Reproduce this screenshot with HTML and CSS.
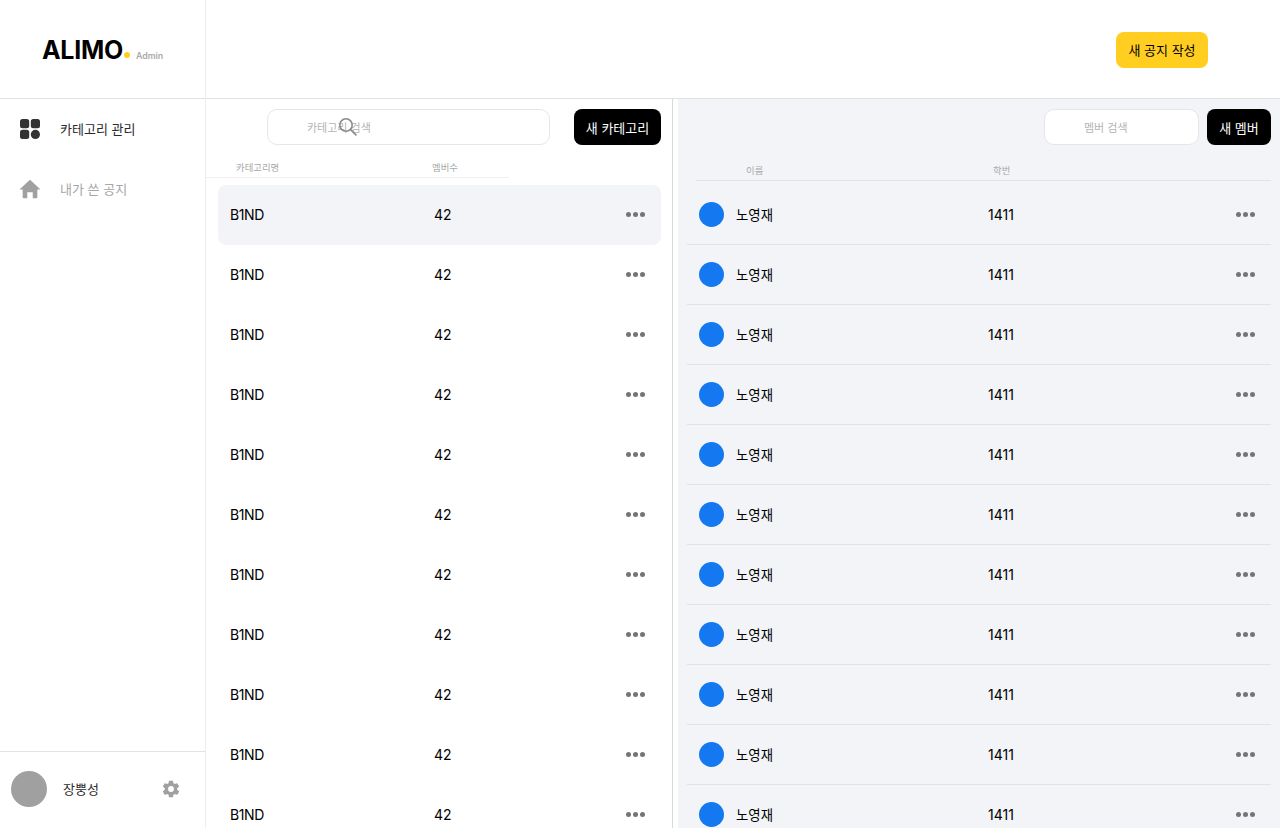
FILE: index.html
```html
<!DOCTYPE html>
<html lang="ko">
<head>
    <meta charset="utf-8">
    <title>ALIMO Admin</title>
    <link rel="stylesheet" href="styles.css">
</head>
<body>
    <div class="app">
        <aside class="side">
            <div class="logo">
                <span class="logo-name">ALIMO</span><span class="logo-dot"></span><span class="logo-sub">Admin</span>
            </div>
            <nav class="menu">
                <a class="menu-item active">
                    <svg width="22" height="22" viewBox="0 0 22 22"><rect x="1" y="1" width="9.2" height="9.2" rx="2.5" fill="#333"/><rect x="11.8" y="1" width="9.2" height="9.2" rx="2.5" fill="#333"/><rect x="1" y="11.8" width="9.2" height="9.2" rx="2.5" fill="#333"/><circle cx="16.4" cy="16.4" r="4.6" fill="#333"/></svg>
                    <span>카테고리 관리</span>
                </a>
                <a class="menu-item">
                    <svg width="24" height="22" viewBox="0 0 24 22"><path d="M12 1 L23.5 11.6 H20 V20 a1 1 0 0 1 -1 1 H15 V14.5 H9 V21 H5 a1 1 0 0 1 -1 -1 V11.6 H.5 Z" fill="#a0a0a0"/></svg>
                    <span>내가 쓴 공지</span>
                </a>
            </nav>
            <div class="profile">
                <span class="profile-pic"></span>
                <span class="profile-name">장뿡성</span>
                <svg class="gear" width="20" height="20" viewBox="0 0 24 24"><path fill="#a0a0a0" d="M19.4 13c.04-.33.1-.66.1-1s-.06-.67-.1-1l2.1-1.65c.2-.15.25-.42.13-.64l-2-3.46c-.12-.22-.4-.3-.6-.22l-2.5 1c-.52-.4-1.08-.73-1.7-.98l-.37-2.65A.5.5 0 0 0 14 2h-4a.5.5 0 0 0-.5.42l-.37 2.65c-.62.25-1.18.58-1.7.98l-2.5-1c-.2-.08-.48 0-.6.22l-2 3.46c-.12.22-.07.49.13.64L4.6 11c-.04.33-.1.66-.1 1s.06.67.1 1l-2.14 1.65c-.2.15-.25.42-.13.64l2 3.46c.12.22.4.3.6.22l2.5-1c.52.4 1.08.73 1.7.98l.37 2.65c.04.24.25.42.5.42h4c.25 0 .46-.18.5-.42l.37-2.65c.62-.25 1.18-.58 1.7-.98l2.5 1c.2.08.48 0 .6-.22l2-3.46c.12-.22.07-.49-.13-.64L19.4 13zM12 15.5a3.5 3.5 0 1 1 0-7 3.5 3.5 0 0 1 0 7z"/></svg>
            </div>
        </aside>
        <main class="main">
            <header class="top">
                <button class="btn-yellow">새 공지 작성</button>
            </header>
            <div class="content">
                <section class="cate">
                    <div class="cate-bar">
                        <div class="search cate-search">
                            <span class="holder">카테고리 검색</span>
                            <svg class="search-icon" width="20" height="20" viewBox="0 0 20 20"><circle cx="8" cy="8" r="6.2" fill="none" stroke="#8a8a8a" stroke-width="1.6"/><path d="M12.6 12.6 L18.4 18.4" stroke="#8a8a8a" stroke-width="1.6"/></svg>
                        </div>
                        <button class="btn-black">새 카테고리</button>
                    </div>
                    <div class="cate-head">
                        <span class="cate-col1">카테고리명</span>
                        <span>멤버수</span>
                    </div>
                    <div class="cate-list" id="cateList"></div>
                </section>
                <section class="member">
                    <div class="member-bar">
                        <div class="search member-search"><span class="holder">멤버 검색</span></div>
                        <button class="btn-black">새 멤버</button>
                    </div>
                    <div class="member-head">
                        <span class="member-col1">이름</span>
                        <span>학번</span>
                    </div>
                    <div class="member-list" id="memberList"></div>
                </section>
            </div>
        </main>
    </div>
    <script src="main.js"></script>
</body>
</html>
```

FILE: styles.css
```css
*{margin: 0; padding: 0; box-sizing: border-box;}
html,body{height: 100%; overflow: hidden;}
body{font-family: Inter, "Noto Sans CJK KR", sans-serif; background: #fff; color: #000;}
button{font-family: inherit; border: 0;}

.app{display: flex; height: 828px;}

/* left menu */
.side{width: 206px; flex: none; display: flex; flex-direction: column; border-right: 1px solid #ededed;}
.logo{height: 99px; flex: none; display: flex; align-items: center; padding: 1px 0 0 42px; border-bottom: 1px solid #e2e2e2;}
.logo-name{font-size: 25px; font-weight: 700; letter-spacing: -0.3px;}
.logo-dot{width: 6px; height: 6px; border-radius: 50%; background: #ffce20; margin: 11px 0 0 1px;}
.logo-sub{font-size: 8.8px; font-weight: 600; color: #ababab; margin: 11px 0 0 6px;}

.menu{flex: 1; display: flex; flex-direction: column;}
.menu-item{height: 60px; display: flex; align-items: center; gap: 19px; padding: 0 0 1px 19px; font-size: 13px; color: #a6a6a6;}
.menu-item svg{flex: none; width: 22px; margin-top: 1px;}
.menu-item.active{color: #2a2a2a;}

.profile{height: 77px; flex: none; display: flex; align-items: center; padding: 0 0 2px 11px; border-top: 1px solid #e2e2e2;}
.profile-pic{width: 36px; height: 36px; border-radius: 50%; background: #a0a0a0;}
.profile-name{font-size: 13px; color: #2a2a2a; margin-left: 16px; width: 98px; padding-bottom: 2px;}

/* right */
.main{flex: 1; min-width: 0; display: flex; flex-direction: column;}
.top{height: 99px; flex: none; display: flex; align-items: center; justify-content: flex-end; padding: 1px 72px 0 0; border-bottom: 1px solid #e2e2e2;}
.btn-yellow{width: 92px; height: 36px; border-radius: 8px; background: #ffce20; font-size: 13px; color: #000;}
.btn-black{height: 36px; border-radius: 8px; background: #000; color: #fff; font-size: 13px; flex: none;}

.content{flex: 1; display: flex; min-height: 0;}

.search{height: 36px; border: 1px solid #e6e6ea; border-radius: 10px; background: #fff; position: relative; display: flex; align-items: center; padding: 0 0 1px 39px;}
.holder{font-size: 11px; color: #b4b4b4;}
.search-icon{position: absolute; left: 70px; top: 7px;}

/* category */
.cate{width: 467px; flex: none; border-right: 1px solid #d9d9d9; overflow: hidden;}
.cate-bar{display: flex; justify-content: flex-end; gap: 24px; padding: 10px 11px 0 0;}
.cate-search{width: 283px;}
.cate-bar .btn-black{width: 87px;}
.cate-head{width: 303px; height: 24px; margin-top: 9px; display: flex; align-items: center; font-size: 9.4px; color: #a8a8a8; border-bottom: 1px solid #efefef; padding: 2px 0 0 30px;}
.cate-col1{width: 196px;}
.cate-list{padding: 7px 11px 0 12px;}
.cate-row{height: 60px; display: flex; align-items: center; padding: 0 16px 1px 12px; font-size: 14px; border-radius: 8px;}
.cate-row.on{background: #f3f4f8;}
.cate-name{width: 204px; letter-spacing: -0.4px;}
.cate-num{flex: 1;}

.dots{display: flex; gap: 2px; flex: none;}
.dots i{width: 5px; height: 5px; border-radius: 50%; background: #757575;}

/* member */
.member{flex: 1; min-width: 0; margin-left: 5px; background: #f3f4f8; overflow: hidden; padding-right: 9px;}
.member-bar{display: flex; justify-content: flex-end; gap: 8px; padding-top: 10px;}
.member-search{width: 155px;}
.member-bar .btn-black{width: 64px;}
.member-head{height: 26px; margin: 10px 0 0 18px; display: flex; align-items: center; font-size: 9.4px; color: #a8a8a8; border-bottom: 1px solid #e2e2e6; padding: 4px 0 0 50px;}
.member-col1{width: 247px;}
.member-list{padding: 4px 0 0 9px;}
.member-row{height: 60px; display: flex; align-items: center; padding: 0 16px 0 12px; font-size: 14px; border-bottom: 1px solid #e2e2e6;}
.member-pic{width: 25px; height: 25px; border-radius: 50%; background: #1479f0; flex: none;}
.member-name{width: 252px; margin-left: 12px; font-size: 13.4px; padding-bottom: 1px;}
.member-num{flex: 1;}
```

FILE: main.js
```js
var cateList = document.getElementById('cateList');
var memberList = document.getElementById('memberList');
var dots = '<span class="dots"><i></i><i></i><i></i></span>';
var html = '';

for(var i=0;i<11;i++){
    html += '<div class="cate-row'+(i==0?' on':'')+'"><span class="cate-name">B1ND</span><span class="cate-num">42</span>'+dots+'</div>';
}
cateList.innerHTML = html;

html = '';
for(var j=0;j<11;j++){
    html += '<div class="member-row"><span class="member-pic"></span><span class="member-name">노영재</span><span class="member-num">1411</span>'+dots+'</div>';
}
memberList.innerHTML = html;
```
